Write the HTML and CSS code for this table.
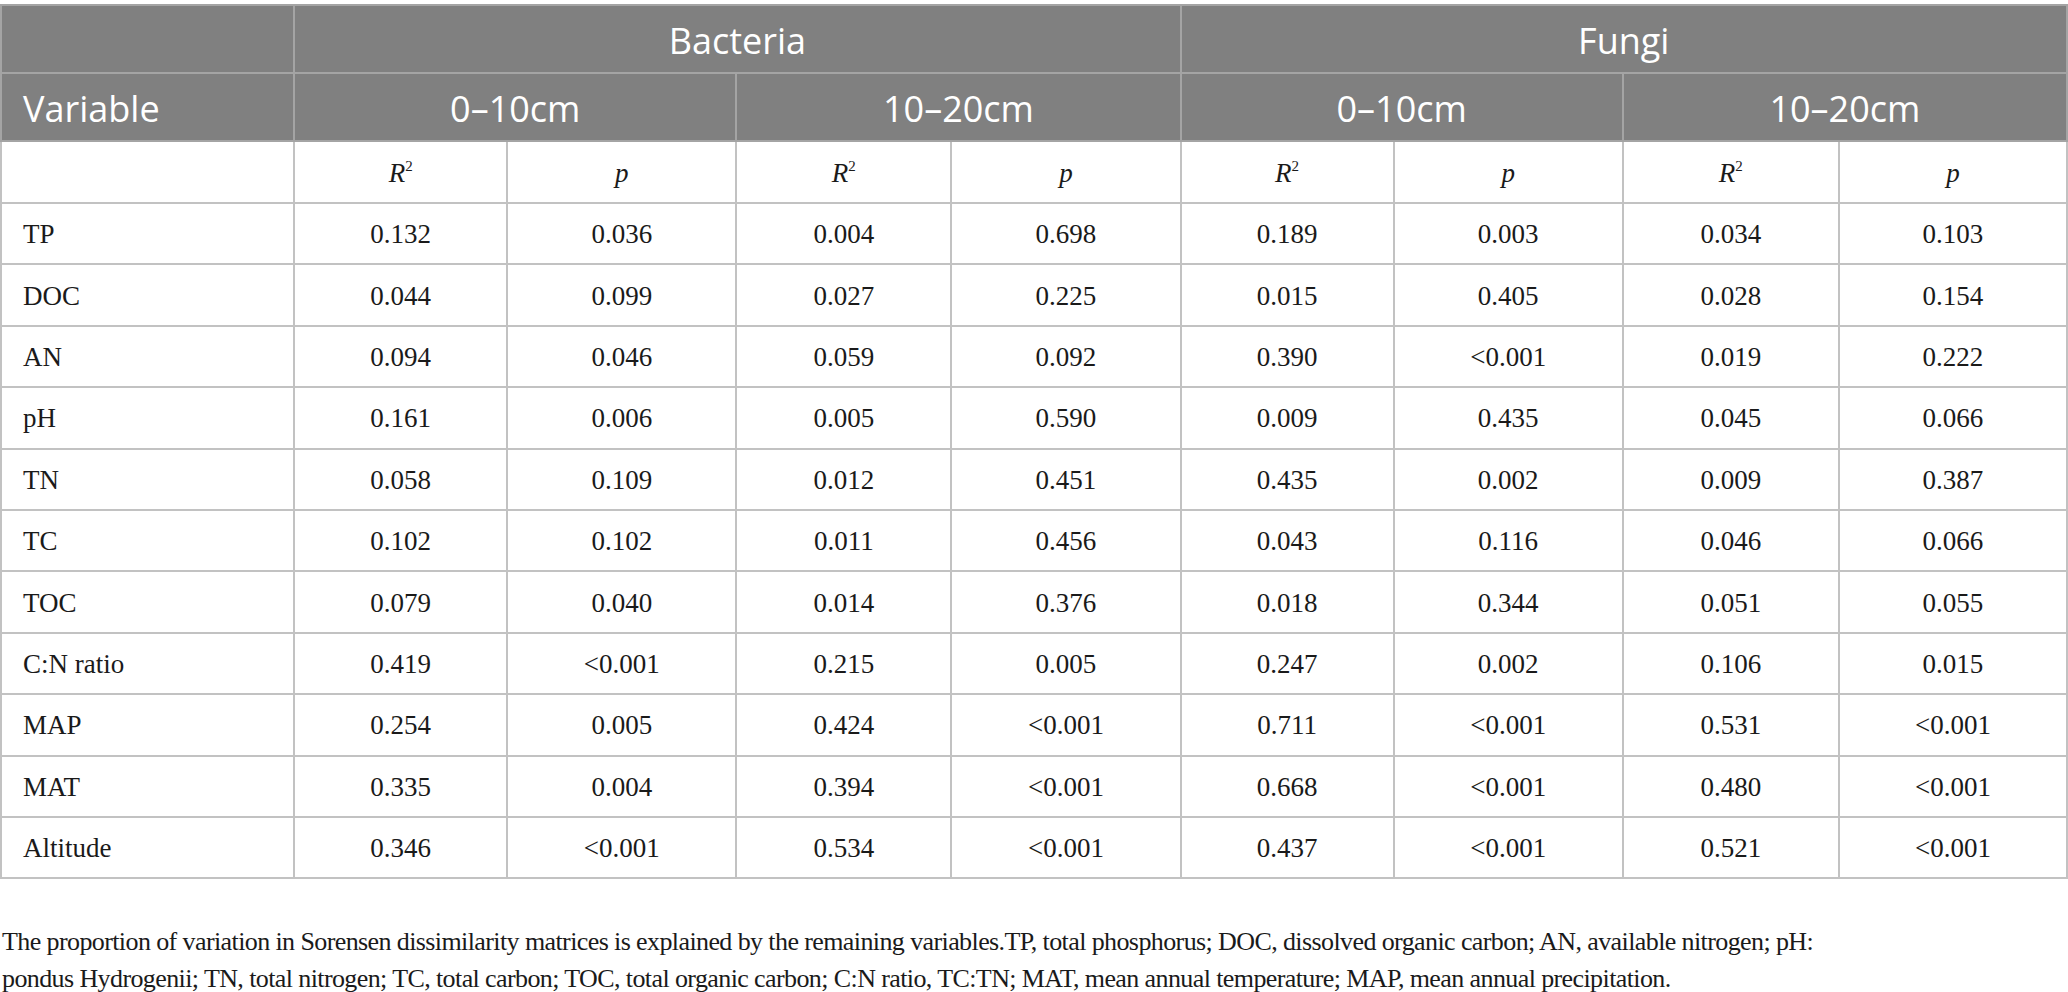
FILE: index.html
```html
<!DOCTYPE html>
<html>
<head>
    <title>Sorensen dissimilarity table</title>
    <link rel="stylesheet" href="styles.css">
</head>
<body>
    <table class="results">
        <colgroup>
            <col class="col-var">
            <col class="col-r">
            <col class="col-p">
            <col class="col-r2">
            <col class="col-p">
            <col class="col-r">
            <col class="col-p">
            <col class="col-r3">
            <col class="col-p2">
        </colgroup>
        <thead>
            <tr class="head-top">
                <th></th>
                <th colspan="4">Bacteria</th>
                <th colspan="4">Fungi</th>
            </tr>
            <tr class="head-depth">
                <th class="label">Variable</th>
                <th colspan="2">0–10cm</th>
                <th colspan="2">10–20cm</th>
                <th colspan="2">0–10cm</th>
                <th colspan="2">10–20cm</th>
            </tr>
        </thead>
        <tbody>
            <tr class="sub">
                <td></td>
                <td><i>R</i><sup>2</sup></td>
                <td><i>p</i></td>
                <td><i>R</i><sup>2</sup></td>
                <td><i>p</i></td>
                <td><i>R</i><sup>2</sup></td>
                <td><i>p</i></td>
                <td><i>R</i><sup>2</sup></td>
                <td><i>p</i></td>
            </tr>
            <tr><td>TP</td><td>0.132</td><td>0.036</td><td>0.004</td><td>0.698</td><td>0.189</td><td>0.003</td><td>0.034</td><td>0.103</td></tr>
            <tr><td>DOC</td><td>0.044</td><td>0.099</td><td>0.027</td><td>0.225</td><td>0.015</td><td>0.405</td><td>0.028</td><td>0.154</td></tr>
            <tr><td>AN</td><td>0.094</td><td>0.046</td><td>0.059</td><td>0.092</td><td>0.390</td><td>&lt;0.001</td><td>0.019</td><td>0.222</td></tr>
            <tr><td>pH</td><td>0.161</td><td>0.006</td><td>0.005</td><td>0.590</td><td>0.009</td><td>0.435</td><td>0.045</td><td>0.066</td></tr>
            <tr><td>TN</td><td>0.058</td><td>0.109</td><td>0.012</td><td>0.451</td><td>0.435</td><td>0.002</td><td>0.009</td><td>0.387</td></tr>
            <tr><td>TC</td><td>0.102</td><td>0.102</td><td>0.011</td><td>0.456</td><td>0.043</td><td>0.116</td><td>0.046</td><td>0.066</td></tr>
            <tr><td>TOC</td><td>0.079</td><td>0.040</td><td>0.014</td><td>0.376</td><td>0.018</td><td>0.344</td><td>0.051</td><td>0.055</td></tr>
            <tr><td>C:N ratio</td><td>0.419</td><td>&lt;0.001</td><td>0.215</td><td>0.005</td><td>0.247</td><td>0.002</td><td>0.106</td><td>0.015</td></tr>
            <tr><td>MAP</td><td>0.254</td><td>0.005</td><td>0.424</td><td>&lt;0.001</td><td>0.711</td><td>&lt;0.001</td><td>0.531</td><td>&lt;0.001</td></tr>
            <tr><td>MAT</td><td>0.335</td><td>0.004</td><td>0.394</td><td>&lt;0.001</td><td>0.668</td><td>&lt;0.001</td><td>0.480</td><td>&lt;0.001</td></tr>
            <tr><td>Altitude</td><td>0.346</td><td>&lt;0.001</td><td>0.534</td><td>&lt;0.001</td><td>0.437</td><td>&lt;0.001</td><td>0.521</td><td>&lt;0.001</td></tr>
        </tbody>
    </table>

    <p class="footnote">The proportion of variation in Sorensen dissimilarity matrices is explained by the remaining variables.TP, total phosphorus; DOC, dissolved organic carbon; AN, available nitrogen; pH:<br>pondus Hydrogenii; TN, total nitrogen; TC, total carbon; TOC, total organic carbon; C:N ratio, TC:TN; MAT, mean annual temperature; MAP, mean annual precipitation.</p>
</body>
</html>
```

FILE: styles.css
```css
body {
    margin: 0;
    background-color: #fff;
    color: #1a1a1a;
    font-family: "Liberation Serif", "Times New Roman", serif;
}

.results {
    width: 2068px;
    margin-top: 4px;
    border-collapse: collapse;
    table-layout: fixed;
}

.col-var { width: 293px; }
.col-r { width: 213px; }
.col-p { width: 229px; }
.col-r2 { width: 215px; }
.col-r3 { width: 216px; }
.col-p2 { width: 228px; }

.results th {
    background-color: #808080;
    color: #fff;
    font-family: "Open Sans", "Noto Sans", sans-serif;
    font-weight: 400;
    font-size: 36px;
    height: 68px;
    padding: 2px 0 0;
    text-align: center;
    border: 2px solid #a4a4a4;
    box-sizing: border-box;
}

.results th.label {
    text-align: left;
    padding-left: 21px;
}

.results td {
    height: 61.4px;
    padding: 2px 0 0;
    font-size: 27px;
    text-align: center;
    border: 2px solid #c2c2c2;
    box-sizing: border-box;
}

.results td:first-child {
    text-align: left;
    padding-left: 21px;
}

.sub td {
    height: 62px;
}

.sub sup {
    font-size: 15px;
    vertical-align: 11px;
    line-height: 0;
}

.footnote {
    margin: 44px 0 0 2px;
    font-size: 26px;
    letter-spacing: -0.6px;
    line-height: 37px;
}
```
